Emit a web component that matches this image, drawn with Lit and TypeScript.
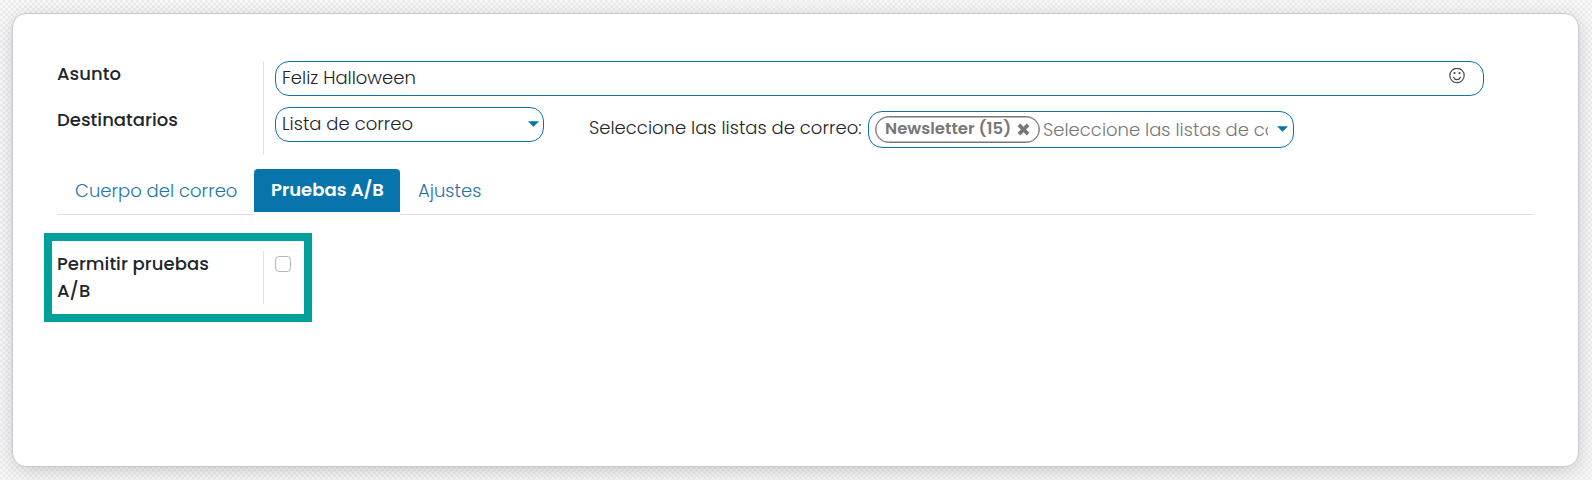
import { LitElement, html, css } from "lit";
import { customElement } from "lit/decorators.js";

@customElement("app-root")
class AppRoot extends LitElement {
  static styles = css`
    * { box-sizing: border-box; }
    :host {
      display: block;
      box-sizing: border-box;
      height: 480px;
      overflow: hidden;
      padding: 13px 13px 13px 12px;
      background: conic-gradient(#ececec 25%, #f9f9f9 0 50%, #ececec 0 75%, #f9f9f9 0) 0 0 / 5.34px 5.34px;
      font: 300 18px/27px Poppins, Inter, "Open Sans", sans-serif;
      color: #212529;
      white-space: nowrap;
    }
    .sheet {
      height: 454px;
      padding: 47px 44px 0;
      border: 1px solid #c8c8d3;
      border-radius: 14px;
      background: #fff;
      box-shadow: 0 4px 20px -2px rgba(0, 0, 0, 0.2);
    }
    .group { display: flex; height: 94px; }
    .labels { width: 206px; margin-top: -1px; }
    .label { height: 46px; font-weight: 500; letter-spacing: 0.04px; }
    .fields {
      flex: 1;
      padding-left: 11px;
      border-left: 1px solid #dee2e6;
    }
    .field {
      display: flex;
      border: 1px solid #0874ac;
      border-radius: 14px;
      height: 35px;
      padding: 2px 6px;
    }
    .wide { width: 1209px; justify-content: space-between; }
    .smile { margin: 4px 12px 0 0; }
    .row { display: flex; margin-top: 11px; }
    .select { width: 269px; justify-content: space-between; padding-right: 4px; }
    .caret { margin-top: 11px; flex: none; }
    .prompt { width: 279px; margin: 7px 0 0 45px; }
    .many { width: 426px; height: 37px; margin-top: 4px; padding: 4px 5px 4px 6px; }
    .tag {
      display: flex;
      width: 165px;
      height: 27px;
      flex: none;
      padding-left: 9px;
      border: 1px solid #777;
      border-radius: 14px;
      box-shadow: inset 0 0 0 0.5px #777;
      color: #777;
      font-size: 16.5px;
      font-weight: 600;
      line-height: 23px;
    }
    .cross { margin: 6px 0 0 6px; }
    .hint {
      width: 225px;
      margin-left: 3px;
      overflow: hidden;
      color: #777;
      line-height: 27px;
    }
    .many .caret { margin: 10px 0 0 9px; }
    .tabs { display: flex; height: 46px; margin-top: 14px; }
    .tab {
      padding: 8px 0 0 18px;
      height: 46px;
      border-bottom: 1px solid #dee2e6;
      color: #1f74a8;
    }
    .first { width: 197px; }
    .last { flex: 1; }
    .active {
      width: 146px;
      height: 43px;
      padding: 7px 0 0 17px;
      border: 0;
      border-radius: 4px 4px 0 0;
      background: #0874ac;
      color: #fff;
      font-weight: 600;
    }
    .marked {
      display: flex;
      width: 268px;
      height: 89px;
      margin: 18px 0 0 -13px;
      padding: 10px 5px;
      border: 8px solid #00a19a;
    }
    .option { width: 206px; margin-top: -1px; font-weight: 500; letter-spacing: 0.04px; }
    .choice { height: 53px; padding: 5px 0 0 11px; border-left: 1px solid #dee2e6; }
    .box {
      width: 16px;
      height: 16px;
      border: 1px solid #b3b7c2;
      border-radius: 4px;
    }
    svg { display: block; }
  `;

  caret() {
    return html`<svg class="caret" width="11" height="6" viewBox="0 0 11 6"><path d="M0 .2h11L5.5 5.7z" fill="#0874ac" /></svg>`;
  }

  render() {
    return html`
      <main class="sheet">
        <section class="group">
          <div class="labels">
            <div class="label">Asunto</div>
            <div class="label">Destinatarios</div>
          </div>
          <div class="fields">
            <div class="field wide">
              <span>Feliz Halloween</span>
              <svg class="smile" width="16" height="16" viewBox="0 0 16 16" fill="none" stroke="#444a50">
                <circle cx="8" cy="7.5" r="7.2" stroke-width="1.2" />
                <path d="M4.6 9.2c1.2 3.1 5.6 3.1 6.8 0" stroke-width="1.2" stroke-linecap="round" />
                <circle cx="5.5" cy="5.1" r="1.1" fill="#444a50" stroke="none" />
                <circle cx="10.5" cy="5.1" r="1.1" fill="#444a50" stroke="none" />
              </svg>
            </div>
            <div class="row">
              <div class="field select"><span>Lista de correo</span>${this.caret()}</div>
              <div class="prompt">Seleccione las listas de correo:</div>
              <div class="field many">
                <div class="tag">
                  <span>Newsletter (15)</span>
                  <svg class="cross" width="13" height="13" viewBox="0 0 13 13">
                    <path d="M1.9 1.9l9.2 9.2M11.1 1.900l-9.200 9.200" stroke="#777" stroke-width="3.7" />
                  </svg>
                </div>
                <div class="hint">Seleccione las listas de correo</div>
                ${this.caret()}
              </div>
            </div>
          </div>
        </section>
        <nav class="tabs">
          <div class="tab first">Cuerpo del correo</div>
          <div class="tab active">Pruebas A/B</div>
          <div class="tab last">Ajustes</div>
        </nav>
        <section class="marked">
          <div class="option">Permitir pruebas<br />A/B</div>
          <div class="choice"><div class="box"></div></div>
        </section>
      </main>
    `;
  }
}
